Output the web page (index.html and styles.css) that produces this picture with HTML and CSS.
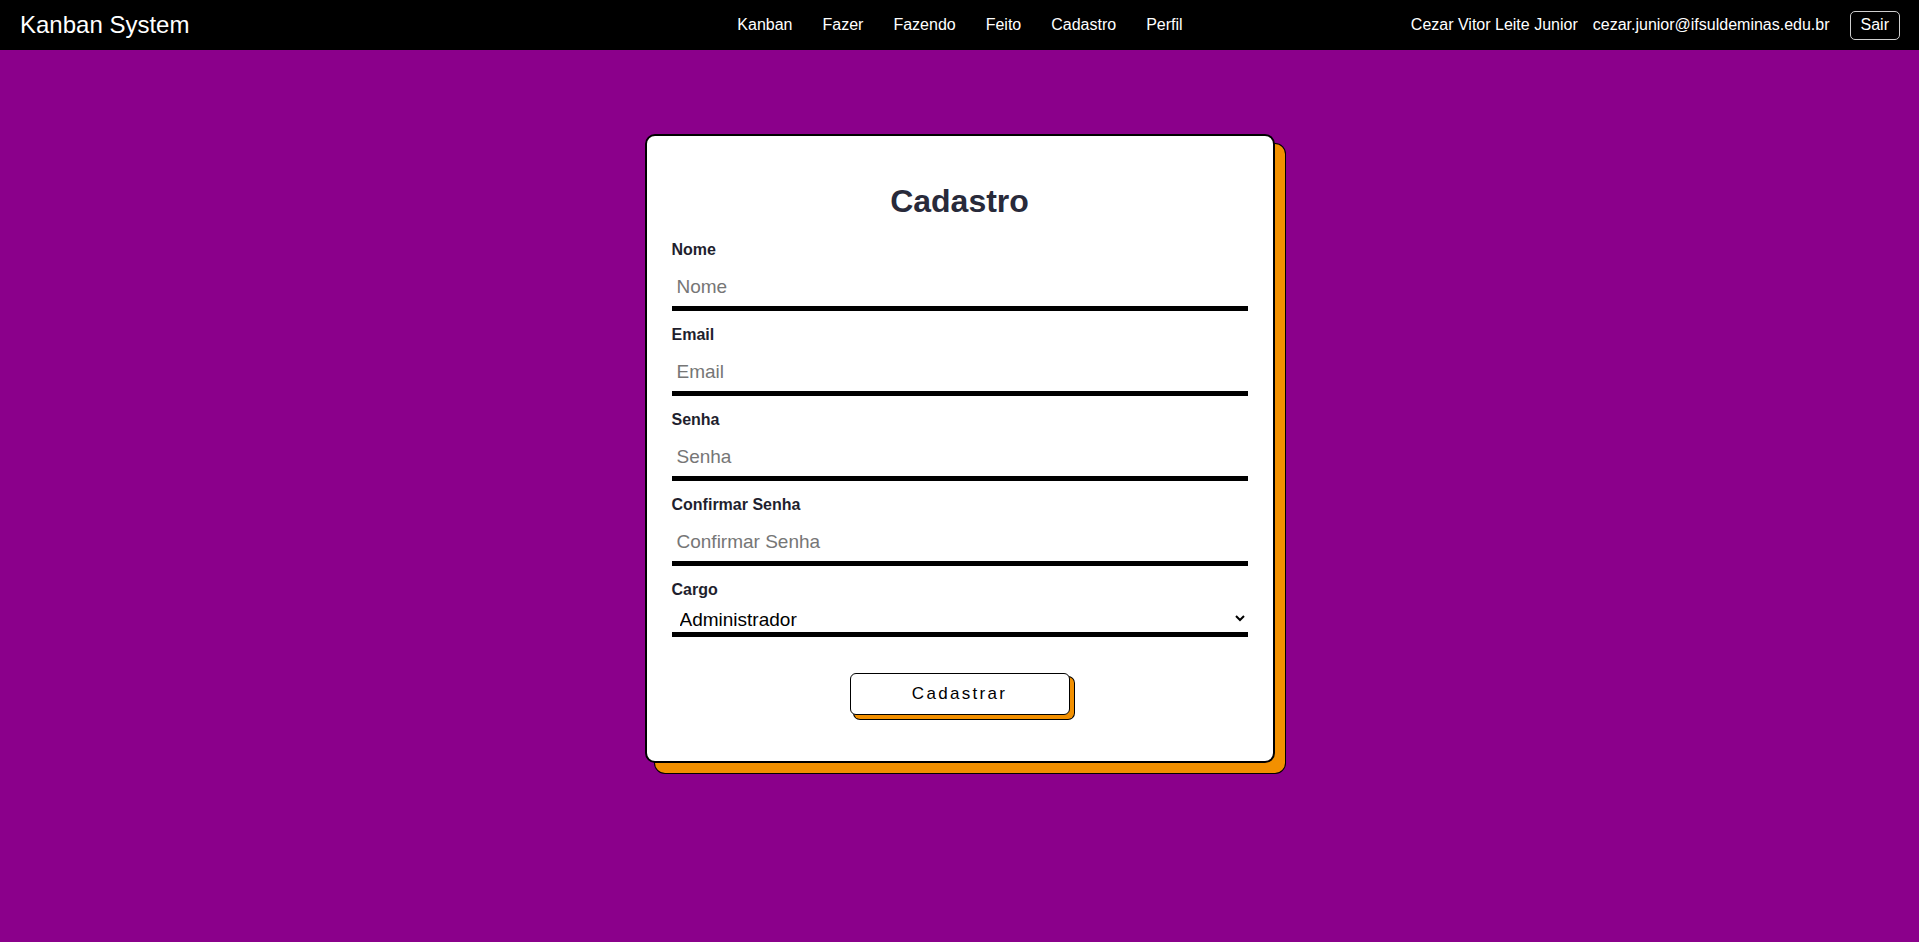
FILE: index.html
```html
<!DOCTYPE html>
<html lang="pt-BR">
<head>
<meta charset="utf-8">
<title>Kanban System - Cadastro</title>
<link rel="stylesheet" href="styles.css">
</head>
<body>
<header class="navbar">
  <div class="brand">Kanban System</div>
  <nav class="nav-links">
    <a href="#">Kanban</a>
    <a href="#">Fazer</a>
    <a href="#">Fazendo</a>
    <a href="#">Feito</a>
    <a href="#">Cadastro</a>
    <a href="#">Perfil</a>
  </nav>
  <div class="user">
    <span class="user-name">Cezar Vitor Leite Junior</span>
    <span class="user-email">cezar.junior@ifsuldeminas.edu.br</span>
    <button class="logout" type="button">Sair</button>
  </div>
</header>
<main class="page">
  <section class="card">
    <h2 class="title">Cadastro</h2>
    <form class="form">
      <div class="field">
        <label for="nome">Nome</label>
        <input id="nome" type="text" placeholder="Nome">
      </div>
      <div class="field">
        <label for="email">Email</label>
        <input id="email" type="email" placeholder="Email">
      </div>
      <div class="field">
        <label for="senha">Senha</label>
        <input id="senha" type="password" placeholder="Senha">
      </div>
      <div class="field">
        <label for="confirmar">Confirmar Senha</label>
        <input id="confirmar" type="password" placeholder="Confirmar Senha">
      </div>
      <div class="field field-select">
        <label for="cargo">Cargo</label>
        <select id="cargo">
          <option>Administrador</option>
          <option>Usuário</option>
        </select>
      </div>
      <div class="actions">
        <button class="submit" type="button">Cadastrar</button>
      </div>
    </form>
  </section>
</main>
</body>
</html>
```

FILE: styles.css
```css
* {
  box-sizing: border-box;
}

html, body {
  margin: 0;
  padding: 0;
}

body {
  font-family: "Liberation Sans", Arial, sans-serif;
  background: #8b008b;
  min-height: 100vh;
}

.navbar {
  height: 50px;
  background: #000;
  color: #fff;
  display: grid;
  grid-template-columns: 1fr auto 1fr;
  align-items: center;
  padding: 0 19px 0 20px;
}

.brand {
  font-size: 24px;
  line-height: 30px;
  color: #fff;
}

.nav-links {
  display: flex;
  gap: 30px;
}

.nav-links a {
  color: #fff;
  text-decoration: none;
  font-size: 16px;
  line-height: 20px;
}

.user {
  display: flex;
  justify-content: flex-end;
  align-items: center;
  font-size: 16px;
  color: #fff;
}

.user-email {
  margin-left: 15px;
}

.logout {
  margin-left: 20px;
  height: 29px;
  padding: 0 10px;
  background: transparent;
  color: #fff;
  border: 1px solid #cfcfcf;
  border-radius: 5px;
  font-family: "Liberation Sans", Arial, sans-serif;
  font-size: 16px;
  line-height: 20px;
}

.page {
  display: flex;
  justify-content: center;
  padding-top: 84px;
}

.card {
  width: 630px;
  background: #fff;
  border: 2px solid #000;
  border-radius: 10px;
  padding: 25px 25px 25px;
  box-shadow: 10px 10px 0 0 #f29000, 10px 10px 0 1px #000;
}

.title {
  margin: 21px 0 21px;
  text-align: center;
  font-size: 32px;
  line-height: 38px;
  font-weight: 700;
  color: #282a3a;
}

.form {
  display: flex;
  flex-direction: column;
}

.field {
  display: flex;
  flex-direction: column;
  margin-bottom: 15px;
}

.field label {
  font-size: 16px;
  line-height: 18px;
  font-weight: 700;
  color: #1f1f2e;
}

.field input {
  height: 52px;
  padding: 10px 5px 2px;
  border: none;
  border-bottom: 5px solid #000;
  outline: none;
  font-family: "Liberation Sans", Arial, sans-serif;
  font-size: 19px;
  color: #000;
  background: #fff;
}

.field input::placeholder {
  color: #767676;
}

.field-select {
  margin-bottom: 0;
}

.field select {
  height: 38px;
  padding: 8px 4px 0 4px;
  border: none;
  border-bottom: 5px solid #000;
  border-radius: 0;
  outline: none;
  background: #fff;
  font-family: "Liberation Sans", Arial, sans-serif;
  font-size: 19px;
  color: #000;
}

.actions {
  display: flex;
  justify-content: center;
  margin-top: 36px;
  margin-bottom: 21px;
}

.submit {
  width: 220px;
  height: 42px;
  background: #fff;
  border: 1px solid #000;
  border-radius: 6px;
  box-shadow: 4px 4px 0 0 #f29000, 4px 4px 0 1px #000;
  font-family: "Liberation Sans", Arial, sans-serif;
  font-size: 17px;
  letter-spacing: 2.3px;
  color: #000;
}
```
